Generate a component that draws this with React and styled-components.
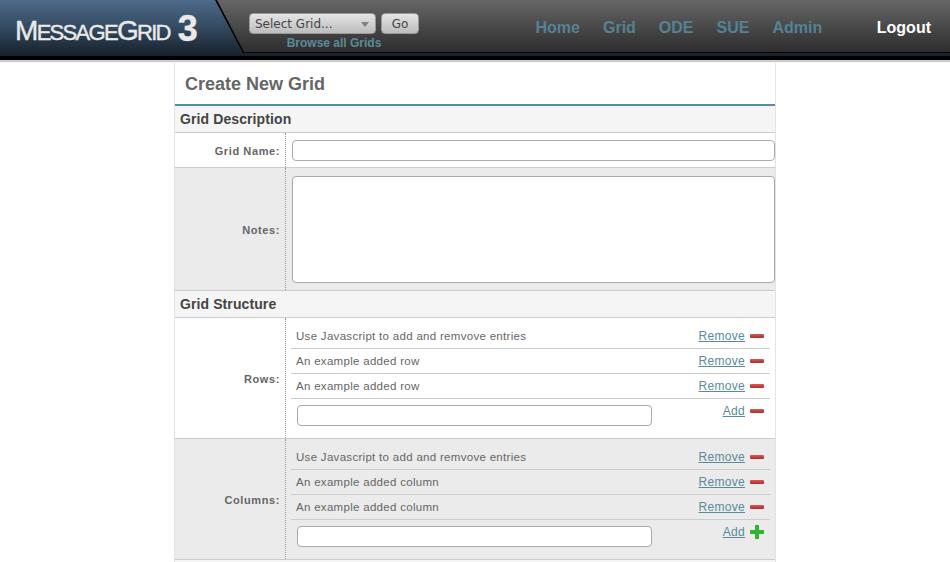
import styled, { createGlobalStyle } from 'styled-components';

const Global = createGlobalStyle`
    html, body { margin: 0; padding: 0; background: #fff; }
    body { font-family: "Liberation Sans", Arial, sans-serif; height: 562px; overflow: hidden; }
    * { box-sizing: border-box; }
`
const Header = styled.header`
    height: 60px;
    display: flex;
    background: linear-gradient(#4c6a8a, #33495f 50%, #16202a);
    border-bottom: 4px solid #000;
    box-shadow: 0 2px 1px #ccc;
`
const Brand = styled.div`
    width: 215px;
    flex: none;
    padding: 10px 0 0 15px;
    color: #e9e9e9;
    line-height: 38px;
    white-space: nowrap;
    -webkit-text-stroke: 0.4px #e9e9e9;
`
const BrandName = styled.span`
    font-size: ${p => (p.$big ? 28 : 22)}px;
    letter-spacing: -1.7px;
`
const BrandNum = styled.span`
    font-size: 36px;
    font-weight: bold;
    margin-left: 8px;
    vertical-align: -1px;
`
const Bar = styled.div`
    flex: 1;
    height: 53px;
    background: #000;
    clip-path: polygon(0 0, 100% 0, 100% 53px, 28px 53px);
`
const BarInner = styled.div`
    height: 52px;
    display: flex;
    position: relative;
    padding-left: 34px;
    background: linear-gradient(#666666, #2d2d2d);
    clip-path: polygon(2px 0, 100% 0, 100% 52px, 29px 52px);
`
const Finder = styled.div`
    padding-top: 13px;
    width: 170px;
    display: flex;
    flex-direction: column;
`
const FinderRow = styled.div`
    display: flex;
    gap: 5px;
`
const Select = styled.div`
    width: 127px;
    height: 21px;
    border-radius: 4px;
    background: linear-gradient(#e4e4e4, #bdbdbd);
    border: 1px solid #999;
    font-family: "DejaVu Sans", sans-serif;
    font-size: 12px;
    line-height: 20px;
    color: #444;
    padding-left: 5px;
    position: relative;
`
const Caret = styled.span`
    position: absolute;
    right: 6px;
    top: 8px;
    border-left: 4px solid transparent;
    border-right: 4px solid transparent;
    border-top: 5px solid #808080;
`
const GoButton = styled.button`
    width: 38px;
    height: 21px;
    padding: 1px 0 0;
    border-radius: 4px;
    background: linear-gradient(#e4e4e4, #bdbdbd);
    border: 1px solid #999;
    font-family: "DejaVu Sans", sans-serif;
    font-size: 12px;
    color: #444;
`
const Browse = styled.a`
    margin-top: 2px;
    text-align: center;
    font-size: 12px;
    line-height: 14px;
    font-weight: bold;
    color: #5b8a9c;
`
const Nav = styled.nav`
    display: flex;
    margin-left: 116.5px;
    padding-top: 18px;
    gap: 23px;
    font-size: 16px;
    font-weight: bold;
    line-height: 19px;
    color: #558295;
`
const Logout = styled.a`
    position: absolute;
    right: 19px;
    top: 18px;
    font-size: 16px;
    line-height: 19px;
    font-weight: bold;
    color: #fff;
`
const Panel = styled.main`
    width: 602px;
    margin-left: 174px;
    border-left: 1px solid #dfe3ee;
    border-right: 1px solid #dfe3ee;
    margin-top: 3px;
`
const Title = styled.h1`
    margin: 0;
    height: 43px;
    padding-left: 10px;
    font-size: 18px;
    line-height: 42px;
    color: #666;
    border-bottom: 2px solid #5b8a9c;
`
const Section = styled.h2`
    margin: 0;
    height: 27px;
    padding-left: 5px;
    font-size: 14px;
    letter-spacing: 0.1px;
    line-height: 26px;
    color: #444;
    background: #f5f5f5;
    border-bottom: 1px solid #ccc;
`
const Row = styled.div`
    display: flex;
    height: ${p => p.$h}px;
    background: ${p => (p.$alt ? '#ebebeb' : '#fff')};
    border-bottom: 1px solid #ccc;
`
const Label = styled.label`
    width: 111px;
    flex: none;
    display: flex;
    align-items: center;
    justify-content: flex-end;
    padding: 1px 5px 0 0;
    font-size: 11px;
    letter-spacing: 0.6px;
    font-weight: bold;
    color: #666;
    border-right: 1px dotted #999;
`
const Field = styled.div`
    flex: 1;
    min-width: 0;
    padding-left: 6px;
    padding-top: ${p => p.$top}px;
`
const Input = styled.input`
    display: block;
    width: 483px;
    height: 21px;
    border: 1px solid #aaa;
    border-radius: 4px;
    background: #fff;
`
const TextArea = styled.textarea`
    display: block;
    width: 483px;
    height: 107px;
    border: 1px solid #aaa;
    border-radius: 4px;
    background: #fff;
    resize: none;
`
const List = styled.div`
    margin-left: -1px;
    padding: 6px 5px 0 0;
`
const Entry = styled.div`
    display: flex;
    justify-content: space-between;
    height: 25px;
    padding: 0 6px 0 5px;
    border-bottom: 1px solid #ccc;
    font-size: 11.5px;
    letter-spacing: 0.3px;
    line-height: 24px;
    color: #666;
`
const EntryForm = styled.div`
    display: flex;
    justify-content: space-between;
    padding: 6px 6px 0 6px;
    line-height: 24px;
`
const SmallInput = styled.input`
    width: 355px;
    height: 21px;
    border: 1px solid #aaa;
    border-radius: 4px;
    background: #fff;
`
const Actions = styled.div`
    display: flex;
    align-items: center;
    height: 24px;
    gap: 5px;
    margin-top: ${p => (p.$form ? -6 : 0)}px;
`
const ActionLink = styled.a`
    color: #5b8a9c;
    font-size: 12px;
    letter-spacing: 0.3px;
    text-decoration: underline;
`
const Minus = styled.span`
    width: 14px;
    height: 4px;
    border-radius: 1px;
    background: linear-gradient(#d85a5a, #b02a2a);
`
const Plus = () => (
    <svg width="14" height="14" viewBox="0 0 14 14">
        <path d="M5 0h4v5h5v4H9v5H5V9H0V5h5z" fill="#2fb52f" />
    </svg>
)

const EntryList = ({ first, name, last }) => (
    <List>
        {[first, name, name].map((text, i) => (
            <Entry key={i}>
                {text}
                <Actions><ActionLink>Remove</ActionLink><Minus /></Actions>
            </Entry>
        ))}
        <EntryForm>
            <SmallInput />
            <Actions $form><ActionLink>Add</ActionLink>{last}</Actions>
        </EntryForm>
    </List>
)

const App = () => {
    return (
        <>
            <Global />
            <Header>
                <Brand>
                    <BrandName $big>M</BrandName><BrandName>ESSAGE</BrandName>
                    <BrandName $big>G</BrandName><BrandName>RID</BrandName>
                    <BrandNum>3</BrandNum>
                </Brand>
                <Bar>
                    <BarInner>
                        <Finder>
                            <FinderRow>
                                <Select>Select Grid...<Caret /></Select>
                                <GoButton>Go</GoButton>
                            </FinderRow>
                            <Browse>Browse all Grids</Browse>
                        </Finder>
                        <Nav>
                            <a>Home</a><a>Grid</a><a>ODE</a><a>SUE</a><a>Admin</a>
                        </Nav>
                        <Logout>Logout</Logout>
                    </BarInner>
                </Bar>
            </Header>
            <Panel>
                <Title>Create New Grid</Title>
                <Section>Grid Description</Section>
                <Row $h={35}>
                    <Label>Grid Name:</Label>
                    <Field $top={7}><Input /></Field>
                </Row>
                <Row $h={123} $alt>
                    <Label>Notes:</Label>
                    <Field $top={8}><TextArea /></Field>
                </Row>
                <Section>Grid Structure</Section>
                <Row $h={121}>
                    <Label>Rows:</Label>
                    <Field><EntryList first="Use Javascript to add and remvove entries" name="An example added row" last={<Minus />} /></Field>
                </Row>
                <Row $h={121} $alt>
                    <Label>Columns:</Label>
                    <Field><EntryList first="Use Javascript to add and remvove entries" name="An example added column" last={<Plus />} /></Field>
                </Row>
                <Section />
            </Panel>
        </>
    )
}

export default App
